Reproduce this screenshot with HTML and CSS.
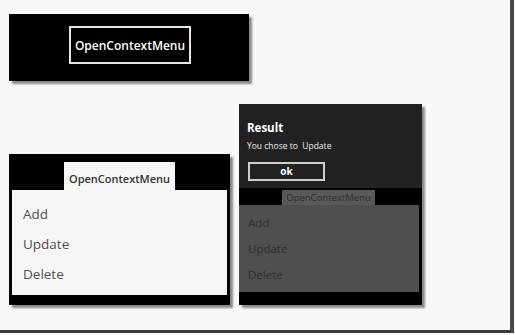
FILE: index.html
```html
<!DOCTYPE html>
<html lang="en">
<head>
    <meta charset="UTF-8">
    <meta name="viewport" content="width=device-width, initial-scale=1.0">
    <title>OpenContextMenu</title>
    <link rel="stylesheet" href="styles.css">
</head>
<body>
<div id="frame">
    <!-- step 1: the page with the button -->
    <div class="shot shot-start">
        <div class="open-btn">OpenContextMenu</div>
    </div>

    <div class="row">
        <!-- step 2: the menu is open -->
        <div class="shot shot-menu">
            <div class="tab">OpenContextMenu</div>
            <div class="menu">
                <div class="item">Add</div>
                <div class="item">Update</div>
                <div class="item">Delete</div>
            </div>
        </div>

        <!-- step 3: the result dialog -->
        <div class="shot shot-result">
            <div class="dialog">
                <div class="dlg-title">Result</div>
                <div class="dlg-text">You chose to&nbsp; Update</div>
                <div class="ok-btn">ok</div>
            </div>
            <div class="strip">
                <div class="tab tab-dim">OpenContextMenu</div>
            </div>
            <div class="menu menu-dim">
                <div class="item">Add</div>
                <div class="item">Update</div>
                <div class="item">Delete</div>
            </div>
        </div>
    </div>
</div>
</body>
</html>
```

FILE: styles.css
```css
body {
    margin: 0;
    padding: 0;
    background: #f8f8f8;
    font-family: 'Open Sans', 'Noto Sans', sans-serif;
}

#frame {
    width: 514px;
    height: 333px;
    box-sizing: border-box;
    padding: 14px 0 0 9px;
    border-right: 4px solid #4a4a4a;
    border-bottom: 3px solid #3a3a3a;
    background: #f8f8f8;
}

.shot {
    background: #000;
    box-shadow: 3px 3px 2px rgba(0, 0, 0, 0.45);
}

/* first screen */
.shot-start {
    width: 240px;
    height: 67px;
    display: flex;
    justify-content: center;
    align-items: flex-start;
    padding-top: 12px;
    box-sizing: border-box;
}

.open-btn {
    width: 122px;
    height: 38px;
    box-sizing: border-box;
    border: 2px solid #e6e6e6;
    color: #fff;
    font-size: 12px;
    font-weight: 600;
    display: flex;
    justify-content: center;
    align-items: center;
    margin-left: 2px;
}

.row {
    display: flex;
    align-items: flex-end;
    gap: 9px;
    margin-top: 23px;
}

/* second screen */
.shot-menu {
    width: 221px;
    height: 151px;
    padding-top: 8px;
    box-sizing: border-box;
}

.tab {
    width: 111px;
    height: 28px;
    box-sizing: border-box;
    margin-left: 55px;
    padding-top: 9px;
    background: #f6f6f6;
    color: #333;
    font-size: 11px;
    font-weight: 600;
    text-align: center;
    line-height: 16px;
}

.menu {
    width: 215px;
    height: 105px;
    margin-left: 3px;
    box-sizing: border-box;
    padding: 9px 0 0 11px;
    background: #f6f6f6;
}

.item {
    height: 30px;
    line-height: 30px;
    font-size: 13.5px;
    color: #505050;
}

/* third screen */
.shot-result {
    width: 183px;
    height: 201px;
}

.dialog {
    height: 84px;
    box-sizing: border-box;
    padding: 17px 0 0 8px;
    background: #222;
    color: #fff;
}

.dlg-title {
    font-size: 11.5px;
    font-weight: 700;
    line-height: 14px;
}

.dlg-text {
    font-size: 8.5px;
    line-height: 12px;
    margin-top: 5px;
    color: #eee;
}

.ok-btn {
    width: 77px;
    height: 19px;
    box-sizing: border-box;
    margin: 10px 0 0 1px;
    border: 2px solid #cfcfcf;
    font-size: 10px;
    font-weight: 700;
    text-align: center;
    line-height: 15px;
}

.strip {
    height: 17px;
    padding-top: 2px;
    box-sizing: border-box;
}

.tab-dim {
    width: 93px;
    height: 15px;
    margin-left: 43px;
    padding-top: 0;
    background: #595959;
    color: #2e2e2e;
    font-size: 9.5px;
    font-weight: 400;
    line-height: 15px;
}

.menu-dim {
    width: 180px;
    height: 87px;
    margin-left: 0;
    padding: 5px 0 0 9px;
    background: #4f4f4f;
}

.menu-dim .item {
    height: 26px;
    line-height: 26px;
    font-size: 11.5px;
    color: #2e2e2e;
}
```
